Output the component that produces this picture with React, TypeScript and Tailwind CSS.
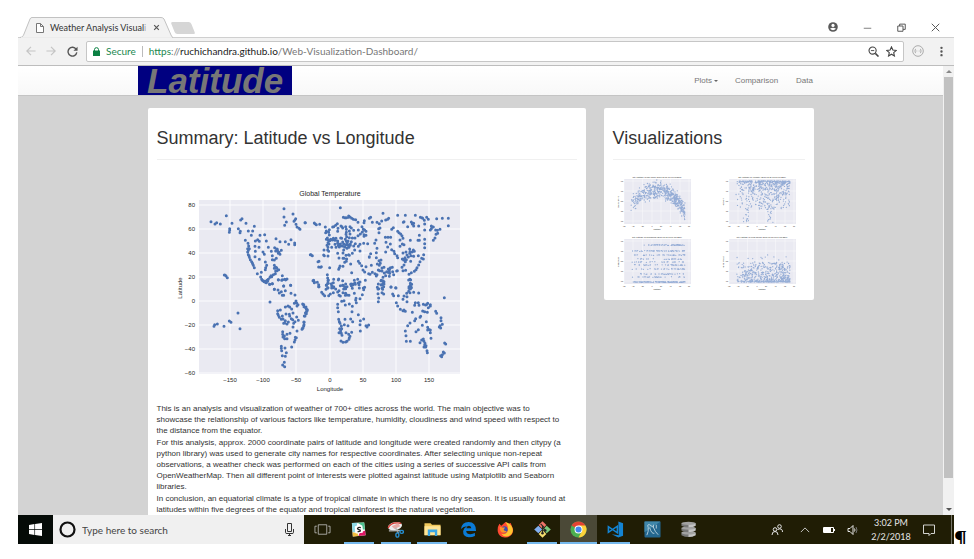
import type { ReactNode } from "react";

type Quadrant = { x: number; y: number; points: string };

// City positions, grouped by map region; each group has its own origin and is stored at 3x scale.
const cityGroups: Quadrant[] = [
  {
    x: 140,
    y: 170,
    points:
      "210,155 222,162 227,158 238,162 256,137 273,160 266,176 265,187 266,181 292,176 298,184 297,188 299,150 303,146 315,160 322,183 335,183 340,169 331,196 357,196 371,194 313,211 321,220 323,228 320,236 325,236 320,246 322,254 325,262 328,269 332,275 335,282 340,293 322,241 324,257 334,279 337,286 343,213 350,209 355,214 376,213 342,229 354,232 343,244 366,246 370,253 342,260 355,268 373,276 377,286 374,293 373,299 382,232 405,206 417,215 433,215 450,209 443,223 461,219 461,224 401,233 407,237 404,243 410,244 421,241 412,250 417,253 409,238 414,247 391,244 394,257 400,270 394,269 406,265 400,286 405,292 400,295 413,299 404,303 403,311 397,314 390,317 387,322 382,328 374,337 367,333 362,328 359,321 392,320 378,331 371,334 407,293 408,302 361,307 349,311 412,329 424,317 424,329 431,328 438,327 428,348 449,346 386,343 394,341 400,358 429,116 429,141 436,156 431,166 456,132 464,146 459,154 465,163 468,171 474,175 477,178 462,150 492,158 250,315 255,318 259,323 253,316 508,254",
  },
  {
    x: 300,
    y: 170,
    points:
      "118,113 13,158 40,159 46,164 42,161 56,163 73,171 127,142 132,143 136,143 143,138 147,141 152,145 157,148 164,149 143,142 109,161 120,168 104,166 95,171 98,170 125,174 134,170 147,170 123,170 110,184 111,175 136,178 145,183 158,181 151,174 136,187 171,157 183,170 189,158 205,145 209,142 190,152 214,157 228,157 246,130 260,148 263,145 242,153 235,161 233,176 237,174 234,188 254,150 272,178 277,173 290,136 313,136 343,136 309,155 307,157 331,156 334,162 338,168 338,160 320,170 358,142 365,145 370,151 377,142 363,143 353,168 371,162 371,180 382,148 391,168 397,171 407,146 424,145 442,145 442,167 388,180 404,180 391,176 417,178 410,190 405,193 409,181 402,204 397,211 76,183 83,187 74,188 85,179 85,195 76,208 82,210 89,208 97,205 81,218 84,222 78,226 81,232 92,232 83,244 81,258 69,240 80,240 86,212 94,210 79,204 102,211 105,205 110,213 119,204 118,222 112,226 105,232 124,228 128,222 131,231 136,214 133,208 139,218 141,226 144,232 151,215 148,222 138,235 128,240 137,200 135,193 147,192 145,203 154,204 162,204 158,228 172,229 163,221 177,223 122,205 125,216 110,219 102,223 115,231 141,213 119,227 148,226 134,224 172,180 178,192 184,186 189,194 195,196 191,180 187,178 195,184 171,197 188,220 200,221 221,220 189,199 225,210 228,235 226,248 205,260 209,251 205,262 177,243 161,240 154,250 145,256 126,249 110,250 114,264 126,265 137,267 135,256 143,254 129,265 136,274 131,277 117,288 115,293 113,298 126,289 149,282 152,308 172,274 176,280 182,287 186,300 191,306 203,311 207,313 214,307 222,311 228,314 195,290 211,286 226,263 234,272 240,270 238,280 229,282 235,286 243,294 249,292 253,202 261,202 269,202 255,217 268,222 260,231 272,239 279,244 281,251 288,257 290,263 254,246 290,184 294,188 299,192 303,197 306,205 297,210 309,224 304,222 297,229 328,211 355,196 351,211 355,211 371,208 371,221 371,233 326,237 337,240 333,246 326,250 315,246 318,255 306,249 330,257 338,259 352,257 322,261 312,263 308,270 313,275 329,274 316,269 304,267 340,244 327,245 368,254 362,265 367,267 357,275 353,285 348,293 345,299 340,304 331,308 324,313 314,301 306,302 309,285 303,292 289,302 287,303 278,314 266,310 262,297 268,293 274,292 265,304 257,305 250,309 243,303 236,302 232,300 261,307 266,298 275,305 254,317 246,322 265,319 30,254 34,257 51,275 54,274 53,291 59,292 61,290 86,293 70,257 68,255 38,331 40,336 53,350 49,337 79,314 80,324 82,330 80,340 76,346 80,354 97,338 98,328 113,327 92,347 97,353 125,346 131,350 138,350 151,347 149,343 157,342 160,331 170,328 173,339 193,331 191,352 175,354 154,355 226,318 229,352 231,357 241,331 246,334 246,342 240,344 248,350 243,355 270,351 284,353 249,335 327,328 328,340 323,330 324,350 330,351 328,357",
  },
  {
    x: 140,
    y: 280,
    points:
      "387,66 410,92 418,90 400,28 411,30 415,39 421,35 424,46 428,46 433,32 428,18 449,16 450,40 462,45 386,13 394,11 376,8 370,5 364,1 380,4 412,0 422,1 434,0 460,70 465,63 467,69 471,74 468,78 433,81 441,78 446,81 452,87 488,74 489,80 494,83 499,89 497,94 494,99 496,101 490,108 410,101 412,106 415,112 421,118 426,117 424,108 435,102 445,103 446,108 456,99 451,116 467,111 472,121 455,119 462,125 458,130 442,126 433,122 431,129 428,130 438,132 456,141 489,127 488,138 486,143 483,148 425,155 425,163 430,168 426,171 431,176 438,176 438,163 447,160 468,153 463,172 466,173 462,180 460,186 452,201 421,199 421,205 422,212 432,204 436,218 424,227 433,229 430,247 425,255 431,260 291,99 297,146 265,123 270,127 249,139 229,132 221,134 219,139",
  },
  {
    x: 300,
    y: 280,
    points:
      "5,72 8,74 15,81 16,87 18,93 14,98 12,108 9,126 9,134 5,145 36,2 40,8 53,14 54,20 62,37 66,42 71,47 83,47 88,42 97,38 75,28 81,23 76,15 81,2 82,10 91,11 92,24 98,20 104,27 110,36 114,46 118,48 114,32 118,17 126,16 128,27 134,12 134,26 125,2 112,0 151,12 155,15 162,9 163,13 174,14 172,9 177,6 187,24 188,29 184,44 160,40 177,56 165,55 164,60 166,68 154,79 145,72 133,75 122,64 129,62 133,46 134,40 144,46 126,38 138,45 110,73 110,83 112,95 153,95 172,104 188,117 178,122 155,125 149,117 132,118 113,118 115,125 117,130 121,138 130,134 141,137 116,146 122,146 119,152 114,158 121,160 123,166 135,158 143,163 152,157 147,169 144,178 138,184 134,186 126,187 120,183 145,173 178,153 177,134 203,135 198,141 195,137 232,12 233,26 231,41 233,54 232,65 240,2 246,3 249,12 242,15 245,28 243,38 248,42 270,21 285,24 275,42 278,47 292,47 306,58 309,48 317,40 318,50 318,65 323,34 327,38 331,23 332,13 324,25 328,16 353,39 338,37 329,0 286,68 290,78 298,88 306,92 313,94 309,90 334,97 341,76 343,68 352,68 354,76 367,73 374,75 380,70 388,74 388,78 382,83 378,73 365,93 371,95 379,97 404,94 407,100 357,112 344,116 341,122 359,109 376,125 327,129 320,137 313,153 315,167 316,184 328,184 345,155 352,149 364,136 380,142 382,147 388,150 388,158 390,175 380,150 420,113 420,122 424,133 417,137 419,144 415,141 430,53 367,177 357,188 362,180 369,184 372,190 375,197 369,201 374,201 371,195 378,212 379,218 427,216 430,219 424,224 422,230 419,227 431,189 434,192",
  },
];

const toDots = (points: string) =>
  points
    .split(" ")
    .map((p) => `M${p.replace(",", " ")}h0`)
    .join("");

const lonTicks = [
  [229, "−150"], [262, "−100"], [295, "−50"], [329, "0"], [362, "50"], [395, "100"], [428, "150"],
] as const;
const latTicks = [
  [205, "80"], [229, "60"], [253, "40"], [277, "20"], [301, "0"], [325, "−20"], [349, "−40"], [373, "−60"],
] as const;

function WorldChart() {
  return (
    <svg viewBox="156 170 305 225" className="block w-[305px]" role="img" aria-label="Global Temperature" fontFamily="'Liberation Sans', Arial, sans-serif">
      <rect x="198" y="200" width="261" height="174" fill="#eaeaf2" />
      {lonTicks.map(([x]) => <path key={x} d={`M${x} 200V374`} stroke="#fff" strokeWidth=".9" />)}
      {latTicks.map(([y]) => <path key={y} d={`M198 ${y}H459`} stroke="#fff" strokeWidth=".9" />)}
      {cityGroups.map((g) => (
        <path
          key={`${g.x}-${g.y}`}
          transform={`translate(${g.x} ${g.y}) scale(.33333)`}
          d={toDots(g.points)}
          stroke="#4a72b2"
          strokeWidth="9"
          strokeLinecap="round"
        />
      ))}
      <g fill="#262626" fontSize="6" textAnchor="middle">
        <text x="329" y="196" fontSize="7">Global Temperature</text>
        {lonTicks.map(([x, t]) => <text key={t} x={x} y="382">{t}</text>)}
        <text x="329" y="391">Longitude</text>
        <text transform="translate(181 288) rotate(-90)">Latitude</text>
      </g>
      <g fill="#262626" fontSize="6" textAnchor="end">
        {latTicks.map(([y, t]) => <text key={t} x="194" y={y + 2}>{t}</text>)}
      </g>
    </svg>
  );
}

function random(seed: number) {
  let s = seed;
  return () => {
    s = (s * 16807) % 2147483647;
    return s / 2147483647;
  };
}

type Kind = "temp" | "humidity" | "cloud" | "wind";

function thumbDots(kind: Kind) {
  const r = random({ temp: 71, humidity: 913, cloud: 4211, wind: 733 }[kind]);
  let d = "";
  const count = kind === "cloud" ? 460 : 560;
  for (let i = 0; i < count; i++) {
    let x = 15 + Math.pow(r(), 0.75) * 54;
    let y = 0;
    const n = (r() + r() + r() - 1.5) * 2;
    if (kind === "temp") {
      const t = (x - 42) / 27;
      y = 18 + (x > 42 ? 22 * t * t : 15 * t * t) + n * 4;
    } else if (kind === "humidity") {
      y = 9 + Math.pow(r(), 2.1) * 28;
      if (i % 18 === 0) {
        x = (i % 36 === 0 ? 25 : 49) + n * 2;
        y = 36 + r() * 15;
      }
    } else if (kind === "cloud") {
      const rows = [13, 13, 19, 19, 23, 27, 30, 33, 37, 42, 45, 50, 50, 50, 50, 50];
      y = rows[Math.floor(r() * rows.length)] + (r() - 0.5) * 0.8;
      if (y < 14) x = 24 + Math.sqrt(r()) * 45;
    } else {
      y = 50 - Math.pow(r(), 2) * 20;
      if (i % 60 === 0) y = 22 + r() * 7;
    }
    d += `M${x.toFixed(1)} ${Math.min(51, Math.max(8, y)).toFixed(1)}h0`;
  }
  return d;
}

const thumbs: { kind: Kind; title: string; axis: string }[] = [
  { kind: "temp", title: "City Latitude vs Max Temp (2017-08-11 01:01 PM EDT)", axis: "Max Temp (F)" },
  { kind: "humidity", title: "City Latitude vs Humidity (2017-08-11 01:01 PM EDT)", axis: "Humidity" },
  { kind: "cloud", title: "City Latitude vs Cloudiness (2017-08-11 01:01 PM EDT)", axis: "Cloudiness" },
  { kind: "wind", title: "City Latitude vs Wind Speed (2017-08-11 01:01 PM EDT)", axis: "Wind Speed" },
];

function Thumb({ kind, title, axis }: { kind: Kind; title: string; axis: string }) {
  return (
    <svg viewBox="0 0 78 60" className="block w-[78px]" role="img" aria-label={title} fontFamily="'Liberation Sans', Arial, sans-serif">
      <rect x="8" y="7" width="67" height="45" fill="#eaeaf2" />
      {[8, 17, 26.5, 36, 45, 54.5, 64, 73].map((x) => (
        <g key={x}>
          <path d={`M${x} 7V52`} stroke="#fff" strokeWidth=".4" />
          <text x={x} y="55" fontSize="2" textAnchor="middle" fill="#333">{Math.round((x - 36) * 2.2)}</text>
        </g>
      ))}
      {[9, 19, 29, 39, 49].map((y) => (
        <g key={y}>
          <path d={`M8 ${y}H75`} stroke="#fff" strokeWidth=".4" />
          <text x="7" y={y + 1} fontSize="2" textAnchor="end" fill="#333">{110 - y * 2}</text>
        </g>
      ))}
      <path d={thumbDots(kind)} stroke="#4c78be" strokeOpacity=".55" strokeWidth="1.3" strokeLinecap="round" />
      <text x="41" y="6" fontSize="2" textAnchor="middle" fill="#222">{title}</text>
      <text x="41" y="58" fontSize="2" textAnchor="middle" fill="#222">Latitude</text>
      <text transform="translate(3 30) rotate(-90)" fontSize="2" textAnchor="middle" fill="#222">{axis}</text>
    </svg>
  );
}

function Glyph({ size = 12, children }: { size?: number; children: ReactNode }) {
  return (
    <svg viewBox="0 0 12 12" width={size} height={size} fill="none" stroke="currentColor" aria-hidden="true">
      {children}
    </svg>
  );
}

function IconButton({ label, className, children }: { label: string; className: string; children: ReactNode }) {
  return (
    <button type="button" aria-label={label} className={`flex shrink-0 items-center justify-center ${className}`}>
      {children}
    </button>
  );
}

function TabStrip() {
  return (
    <div className="flex h-[21px] items-end border-b border-[#cfcfcf] bg-white pl-[2px]">
      <div className="relative -mb-px flex h-[21px] w-[153px] shrink-0 items-center pl-4">
        <svg className="absolute inset-0" viewBox="0 0 153 21" width="153" height="21" aria-hidden="true">
          <path d="M0 20.500C3 20 3 19 4 17L10 2Q10.600 .5 12 .5H141Q143 .5 144 2L151 18Q152 20.500 153 20.500V21H0Z" fill="#f2f2f2" stroke="#c2c2c2" />
          <path d="M1 21H152" stroke="#f2f2f2" strokeWidth="1.500" />
        </svg>
        <svg className="relative" width="8" height="10" viewBox="0 0 8 10" fill="#fff" stroke="#777" aria-hidden="true">
          <path d="M.5 .5H4.500L7.500 3.500V9.500H.5ZM4.500 .5V3.500H7.500" />
        </svg>
        <span className="relative ml-[6px] w-[98px] text-[9px] leading-[14px] whitespace-nowrap text-[#333]">
          Weather Analysis Visual<span className="text-[#aaa]">i</span>
        </span>
        <IconButton label="Close tab" className="relative ml-1 size-2 text-[#555]">
          <Glyph size={7}><path d="M2 2L10 10M10 2L2 10" strokeWidth="2" /></Glyph>
        </IconButton>
      </div>
      <button type="button" aria-label="New tab" className="mb-[3px] h-3 w-5 skew-x-[22deg] rounded-[2px] bg-[#d6d6d6]" />
      <div className="mr-px mb-[5px] ml-auto flex items-center text-[#555]">
        <IconButton label="Profile" className="w-[35px]">
          <svg width="10" height="10" viewBox="0 0 10 10" aria-hidden="true">
            <circle cx="5" cy="5" r="4.800" fill="#5a5a5a" />
            <circle cx="5" cy="3.400" r="1.600" fill="#fff" />
            <path d="M2 6.800Q5 4.600 8 6.800Q5 9.600 2 6.800" fill="#fff" />
          </svg>
        </IconButton>
        <IconButton label="Minimize" className="w-[35px]"><Glyph size={9}><path d="M1 7H11" /></Glyph></IconButton>
        <IconButton label="Restore" className="w-[33px]"><Glyph size={9}><path d="M1 4H8V11H1ZM3.500 4V1.500H11V8.500H8" strokeWidth="1.300" /></Glyph></IconButton>
        <IconButton label="Close" className="w-[35px]"><Glyph size={9}><path d="M1 1L11 11M11 1L1 11" strokeWidth="1.300" /></Glyph></IconButton>
      </div>
    </div>
  );
}

function Toolbar() {
  return (
    <div className="flex h-7 items-center border-b border-[#bdbdbd] bg-[#f2f2f2] pr-[7px] pb-px pl-2">
      <IconButton label="Back" className="w-[10px] text-[#c4c4c4]"><Glyph size={10}><path d="M11.500 6H1M6 1L1 6L6 11" strokeWidth="1.400" /></Glyph></IconButton>
      <IconButton label="Forward" className="ml-[10px] w-[10px] text-[#c4c4c4]"><Glyph size={10}><path d="M.5 6H11M6 1L11 6L6 11" strokeWidth="1.400" /></Glyph></IconButton>
      <IconButton label="Reload" className="ml-[11px] w-[11px] text-[#555]">
        <Glyph size={11}><path d="M10 3.600A4.800 4.800 0 1 0 10.700 7" strokeWidth="1.500" /><path d="M11.500 .8V5.200H7Z" fill="currentColor" stroke="none" /></Glyph>
      </IconButton>
      <div className="ml-2 flex h-[21px] min-w-0 flex-1 items-center rounded-[2px] border border-[#c6c6c6] bg-white px-[6px] text-[10px] leading-[14px]">
        <svg width="7" height="9" viewBox="0 0 7 9" className="shrink-0" aria-hidden="true">
          <path d="M0 3.500H7V9H0Z" fill="#0b8043" />
          <path d="M1.500 4V2.500Q1.500 .7 3.500 .7T5.500 2.500V4" fill="none" stroke="#0b8043" />
        </svg>
        <span className="ml-[6px] text-[#22884f]">Secure</span>
        <span className="mx-[6px] h-[11px] w-px bg-[#bbb]" />
        <div role="textbox" aria-label="Address" contentEditable suppressContentEditableWarning className="min-w-0 flex-1 whitespace-nowrap text-[#777] outline-none">
          <span className="text-[#22884f]">https</span>://<span className="text-[#222]">ruchichandra.github.io</span>/Web-Visualization-Dashboard/
        </div>
        <IconButton label="Zoom" className="w-[11px] text-[#444]"><Glyph size={11}><circle cx="5" cy="5" r="3.900" strokeWidth="1.200" /><path d="M8 8L11.500 11.500" strokeWidth="1.700" /><path d="M3.200 5H6.800" /></Glyph></IconButton>
        <IconButton label="Bookmark" className="ml-[7px] w-[11px] text-[#444]"><Glyph size={11}><path d="M6 1L7.500 4.400L11.200 4.800L8.400 7.200L9.200 10.900L6 9L2.800 10.900L3.600 7.200L.8 4.800L4.500 4.400Z" strokeWidth="1.200" /></Glyph></IconButton>
      </div>
      <IconButton label="Extension" className="ml-2 w-3 text-[#999]"><Glyph><circle cx="6" cy="6" r="5.300" strokeWidth=".8" /><path d="M4 4Q3 4 3 6T4 8M8 4Q9 4 9 6T8 8M4.500 6H5.200M6.800 6H7.500" strokeWidth=".8" /></Glyph></IconButton>
      <IconButton label="Menu" className="ml-[11px] w-3 text-[#555]"><Glyph size={11}><path d="M6 2V2.010M6 6V6.010M6 10V10.010" strokeWidth="2.600" strokeLinecap="round" /></Glyph></IconButton>
    </div>
  );
}

function Card({ title, className, children }: { title: string; className: string; children: ReactNode }) {
  return (
    <section className={`rounded-[2px] bg-white px-[9px] ${className}`}>
      <h2 className="border-b border-[#f0f0f0] pt-5 pb-[10px] text-[18px] leading-[21px] text-[#333]">{title}</h2>
      {children}
    </section>
  );
}

function WebPage() {
  return (
    <div className="flex font-['Liberation_Sans',Arial,sans-serif]">
      <div className="min-w-0 flex-1 bg-[#d3d3d3]">
        <nav className="border-b border-[#c4c4c4] bg-linear-to-b from-white to-[#f8f8f8]">
          <div className="mx-auto flex max-w-[685px] items-center text-[8px] leading-[11px] text-[#777]">
            <a href="#top" className="h-[29px] bg-[#000080] px-[9px] text-[35px] leading-[29px] font-bold text-[#777] italic">Latitude</a>
            <button type="button" className="ml-auto flex items-center gap-[2px]">
              Plots
              <span className="border-x-2 border-t-2 border-x-transparent border-t-[#666]" />
            </button>
            <a href="#comparison" className="ml-[17px]">Comparison</a>
            <a href="#data" className="mr-[10px] ml-[18px]">Data</a>
          </div>
        </nav>
        <main className="mx-auto grid max-w-[684px] grid-cols-3 items-start gap-[18px] px-[9px] pt-3">
          <Card title="Summary: Latitude vs Longitude" className="col-span-2 rounded-b-none">
            <div className="pt-[10px] pb-2"><WorldChart /></div>
            <div className="flex flex-col gap-px text-[8px] leading-[11px] text-[#333]">
              <p>
                This is an analysis and visualization of weather of 700+ cities across the world. The main objective was to<br />
                showcase the relationship of various factors like temperature, humidity, cloudiness and wind speed with respect to<br />
                the distance from the equator.
              </p>
              <p>
                For this analysis, approx. 2000 coordinate pairs of latitude and longitude were created randomly and then citypy (a<br />
                python library) was used to generate city names for respective coordinates. After selecting unique non-repeat<br />
                observations, a weather check was performed on each of the cities using a series of successive API calls from<br />
                OpenWeatherMap. Then all different point of interests were plotted against latitude using Matplotlib and Seaborn<br />
                libraries.
              </p>
              <p>
                In conclusion, an equatorial climate is a type of tropical climate in which there is no dry season. It is usually found at<br />
                latitudes within five degrees of the equator and tropical rainforest is the natural vegetation.
              </p>
            </div>
          </Card>
          <Card title="Visualizations" className="">
            <div className="grid grid-cols-[78px_78px] justify-between pt-3 pr-[6px] pb-2 pl-[3px]">
              {thumbs.map((t) => <Thumb key={t.kind} {...t} />)}
            </div>
          </Card>
        </main>
      </div>
      <div className="flex w-[11px] flex-col items-center bg-[#f1f1f1] py-1">
        <span className="border-x-[3px] border-b-[3px] border-x-transparent border-b-[#888]" />
        <span className="my-1 h-[401px] w-[9px] bg-[#c1c1c1]" />
        <span className="mt-auto border-x-[3px] border-t-[3px] border-x-transparent border-t-[#555]" />
      </div>
    </div>
  );
}

const apps: { name: string; open?: boolean; active?: boolean; art: ReactNode }[] = [
  {
    name: "Task view",
    art: <path d="M4.500 4H13.500V14H4.500ZM3 5.500H1V12.500H3M15 5.500H17V12.500H15" fill="none" stroke="#ccc" strokeWidth=".8" />,
  },
  {
    name: "Slack", open: true,
    art: (
      <>
        <path d="M2 2L15 1.500L16.500 15L3 16.500Z" fill="#fff" />
        <path d="M2 2L8 1.800L7 5L5 6L5.500 12L2.800 12Z" fill="#8ed8e5" />
        <path d="M8 1.800L15 1.500L15.800 9L13.500 9L13 5Z" fill="#4fc391" />
        <path d="M13.500 11L16 10L16.500 15L9 15.800L10 13Z" fill="#e01765" />
        <path d="M2.800 12L8 13L9 15.800L3 16.500Z" fill="#f0bd3e" />
        <path d="M5.500 5.500L12.800 5L13.500 12.500L6.200 13.200Z" fill="#fff" />
        <path d="M11.500 7Q8 6.200 8 8.200Q8.500 9.200 10.500 9.500Q12 11.500 8 11.200" fill="none" stroke="#222" strokeWidth="1.400" />
      </>
    ),
  },
  {
    name: "Snipping Tool", open: true,
    art: (
      <>
        <ellipse cx="8.500" cy="5.500" rx="7.500" ry="4.300" fill="#ececec" transform="rotate(-12 8.500 5.500)" />
        <path d="M1.200 7.500Q4 .5 15 2.500" fill="none" stroke="#d8372f" strokeWidth="1.400" />
        <path d="M5 5.500L12 2.500L14 5.500L8 8.500Z" fill="#e7aaa5" />
        <path d="M2 10.500L14.500 10M9 7L12 13" stroke="#b5b5b5" strokeWidth="1.500" />
        <ellipse cx="11" cy="14.800" rx="1.600" ry="2.300" fill="none" stroke="#268fd1" strokeWidth="1.400" />
        <ellipse cx="15.500" cy="11.500" rx="1.900" ry="1.600" fill="none" stroke="#268fd1" strokeWidth="1.400" />
      </>
    ),
  },
  {
    name: "File Explorer", open: true,
    art: (
      <>
        <path d="M.5 2.500H7L8.500 4H17.500V15H.5Z" fill="#f1c95c" />
        <path d="M.5 5.500H17.500V15H.5Z" fill="#ffe596" />
        <path d="M4 9H14V16H11.500V12H6.500V16H4Z" fill="#3ba7e5" />
      </>
    ),
  },
  {
    name: "Edge",
    art: <path d="M1 8.500Q2 1 9 1Q17 1 17 10.500H6.500Q7 14 11 14Q13.500 14 15.800 12.800V15.800Q13 17.200 9.500 17.200Q3 16.500 3.300 10.500Q4 7 7.500 5.500Q3.500 5.800 1 8.500ZM6.700 7.800H12Q11.800 5 9.500 5Q7 5 6.700 7.800Z" fill="#0b7bd6" fillRule="evenodd" />,
  },
  {
    name: "Firefox",
    art: (
      <>
        <path d="M2.500 3L4.500 5L9 1L12 3L14.500 2L16 6Q18.200 10 15.800 14Q12.500 18 8 17.500Q2 16.800 .8 11Q.3 6.500 2.500 3Z" fill="#ff4a32" />
        <path d="M9 1Q16 3 16.800 9.500Q16.500 14 12.500 16Q7 17.500 4.500 13.500Q9 15 11 11.500Q13 7 9 1Z" fill="#ffc52f" />
        <path d="M5.500 6.500Q8 4.500 10.500 6.500Q12 9 10.500 11.500Q8 13.500 5.500 11.500Z" fill="#3a4fb0" />
        <path d="M3 6Q5 7 8.500 7L7 9.200Q8 11 10.500 10.500Q8 13.500 5 12Q2.500 10 3 6Z" fill="#ff9329" />
      </>
    ),
  },
  {
    name: "Git Bash", open: true,
    art: (
      <>
        <path d="M9 .2L13.100 4.300L9 8.400L4.900 4.300Z" fill="#f0746a" />
        <path d="M4.600 4.900L8.700 9L4.600 13.100L.2 9Z" fill="#82aff0" />
        <path d="M13.400 4.900L17.800 9L13.400 13.100L9.300 9Z" fill="#7cca7d" />
        <path d="M9 9.600L13.100 13.700L9 17.800L4.900 13.700Z" fill="#f7e070" />
        <path d="M7 3L11.500 7.500M9 5.500V13M9 7L12 10" stroke="#2a2a20" strokeWidth="1.200" />
        <circle cx="9" cy="13" r="1.300" fill="#222" /><circle cx="12" cy="10" r="1.300" fill="#222" />
      </>
    ),
  },
  {
    name: "Chrome", open: true, active: true,
    art: (
      <>
        <circle cx="9" cy="9" r="8.500" fill="#4caf50" />
        <path d="M9 9L1.700 4.700A8.500 8.500 0 0 1 16.300 4.700Z" fill="#e34133" />
        <path d="M9 4.700H16.300A8.500 8.500 0 0 1 9 17.500L12.500 11Z" fill="#fdd13a" />
        <circle cx="9" cy="9" r="4.200" fill="#fff" />
        <circle cx="9" cy="9" r="3.200" fill="#4386ee" />
      </>
    ),
  },
  {
    name: "Visual Studio Code", open: true,
    art: (
      <>
        <path d="M12 .5L17 2.500V15.500L12 17.500L5 14L12.500 15Z" fill="#1484d3" />
        <path d="M1.500 6V12L11 5.500V12.500L1.500 6Z" fill="none" stroke="#1484d3" strokeWidth="1.700" />
      </>
    ),
  },
  {
    name: "MySQL Workbench",
    art: (
      <>
        <rect x=".5" y=".5" width="17" height="17" rx="1" fill="#24678f" />
        <path d="M.5 .5H17.500L.5 12Z" fill="#4087aa" />
        <path d="M3 15Q5 11 4.500 7Q3 3 6 4Q11 6 12 11L15 14.500M6 7Q8 14 11 13M10 4V7M13 4V8" fill="none" stroke="#c6dce5" strokeWidth=".9" />
      </>
    ),
  },
  {
    name: "Database",
    art: (
      <>
        {[12.5, 7.5, 2.5].map((y) => (
          <g key={y}>
            <path d={`M1.500 ${y}V${y + 2.5}Q9 ${y + 6.5} 16.500 ${y + 2.5}V${y}Z`} fill="#777" />
            <path d={`M9 ${y}V${y + 4.5}Q14 ${y + 4} 16.500 ${y + 2.5}V${y}Z`} fill="#c4c4c4" />
            <ellipse cx="9" cy={y} rx="7.500" ry="1.800" fill="#a2a2a2" />
          </g>
        ))}
      </>
    ),
  },
];

function Taskbar() {
  return (
    <footer className="flex h-[29px] items-stretch bg-[#201d05] text-[#e6e6e6]">
      <IconButton label="Start" className="w-[35px] bg-[#050b07]">
        <Glyph size={13}><path d="M0 1.800L5 1V5.600H0ZM5.600 .9L12 0V5.600H5.600ZM0 6.300H5V11L0 10.200ZM5.600 6.300H12V12L5.600 11.100Z" fill="#fff" stroke="none" /></Glyph>
      </IconButton>
      <label className="flex w-[251px] items-center bg-[#f0f0f0] px-[6px] text-[#222]">
        <svg width="17" height="17" viewBox="0 0 17 17" className="shrink-0" aria-hidden="true"><circle cx="8.500" cy="8.500" r="7" fill="none" stroke="#111" strokeWidth="2.200" /></svg>
        <input aria-label="Type here to search" placeholder="Type here to search" className="ml-[6px] min-w-0 flex-1 bg-transparent text-[10px] leading-[14px] outline-none placeholder:text-[#444]" />
        <svg width="9" height="13" viewBox="0 0 9 13" className="mr-1 shrink-0" fill="none" stroke="#333" aria-hidden="true"><path d="M2.500 .5H6.500V8.500H2.500ZM.5 6V9.500Q.5 10.500 2 10.500H7Q8.500 10.500 8.500 9.500V6M4.500 10.500V12.500M3 12.500H6" /></svg>
      </label>
      <div className="grid w-[403px] shrink-0 grid-cols-11">
        {apps.map((a) => (
          <button key={a.name} type="button" aria-label={a.name} className={`flex flex-col items-center justify-end ${a.active ? "bg-[#4b4937]" : ""}`}>
            <svg width="17" height="17" viewBox="0 0 18 18" className="mb-1" aria-hidden="true">{a.art}</svg>
            <span className={`h-[2px] ${a.active ? "w-full" : "w-[30px]"} ${a.open ? "bg-[#76b9ed]" : ""}`} />
          </button>
        ))}
      </div>
      <div className="ml-auto flex items-center">
        <IconButton label="People" className="w-3"><Glyph><circle cx="4" cy="5.500" r="1.800" /><path d="M1 11Q1 7.500 4 7.500T7 11" /><circle cx="8.500" cy="2.500" r="1.800" /><path d="M6.500 5.500Q11.500 3.500 11.500 8" /></Glyph></IconButton>
        <IconButton label="Hidden icons" className="ml-[17px] w-[10px]"><Glyph size={10}><path d="M1 8.500L6 3.500L11 8.500" /></Glyph></IconButton>
        <svg width="12" height="8" viewBox="0 0 12 8" className="ml-[13px]" aria-hidden="true"><path d="M.5 1.500H10.500V6.500H.5ZM11.500 3V5" fill="none" stroke="#fff" /><path d="M1 2H8V6H1Z" fill="#fff" /></svg>
        <IconButton label="Volume" className="ml-3 w-3"><Glyph><path d="M1 4.500H3L6 1.500V10.500L3 7.500H1Z" /><path d="M7.500 4.500Q8.500 6 7.500 7.500" /><path d="M9 3Q11 6 9 9" stroke="#777" /></Glyph></IconButton>
        <div className="w-[64px] text-center text-[9px] leading-[14px]">
          <div>3:02 PM</div>
          <div>2/2/2018</div>
        </div>
        <IconButton label="Notifications" className="w-3"><Glyph><path d="M.5 1H11.500V9.500H8L6 11.500V9.500H.5Z" strokeWidth=".9" /></Glyph></IconButton>
        <span className="mr-[2px] ml-4 h-[29px] w-px bg-[#77766a]" />
      </div>
    </footer>
  );
}

export default function App() {
  return (
    <div className="flex items-end bg-white pt-[17px] pr-2 pl-[18px]">
      <div className="min-w-0 flex-1 font-['Lato','Open_Sans',sans-serif]">
        <TabStrip />
        <Toolbar />
        <WebPage />
        <Taskbar />
      </div>
      <div className="flex w-3 items-end">
        <span className="h-5 w-px bg-black" />
        <span className="-mb-1 font-['Liberation_Serif',serif] text-[24px] leading-5 font-bold text-black">¶</span>
      </div>
    </div>
  );
}
